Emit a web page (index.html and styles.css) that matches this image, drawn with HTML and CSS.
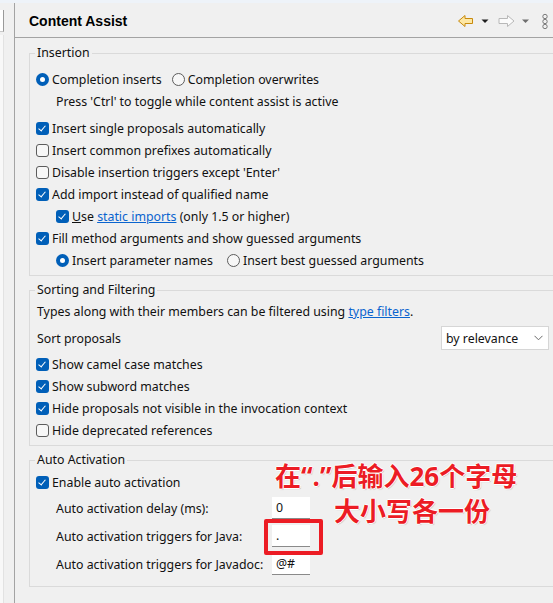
FILE: index.html
```html
<!DOCTYPE html>
<html>
<head>
<meta charset="utf-8">
<link rel="stylesheet" href="styles.css">
</head>
<body>
<div class="top-strip"></div>
<div class="window">
  <div class="side">
    <div class="side-input"></div>
    <div class="side-list"></div>
  </div>
  <div class="main">
    <div class="header">
      <div class="title">Content Assist</div>
      <svg class="nav" width="96" height="34" viewBox="0 0 96 34">
        <path d="M1.5 18 L8 12.5 V15.5 H15.5 V20.5 H8 V23.5 Z" fill="#fde7a4" stroke="#c88a0c" stroke-width="1" stroke-linejoin="round"/>
        <path d="M24.5 16.5 H31.5 L28 20 Z" fill="#1e1e1e"/>
        <path d="M57 18 L50.5 12.5 V15.5 H42 V20.5 H50.5 V23.5 Z" fill="#fbfbfb" stroke="#b8b8b8" stroke-width="1" stroke-linejoin="round"/>
        <path d="M65 16.5 H72 L68.5 20 Z" fill="#6e6e6e"/>
        <circle cx="88" cy="13.5" r="2.2" fill="none" stroke="#7a7a7a" stroke-width="1"/>
        <circle cx="88" cy="18.5" r="2.2" fill="none" stroke="#7a7a7a" stroke-width="1"/>
        <circle cx="88" cy="23.5" r="2.2" fill="none" stroke="#7a7a7a" stroke-width="1"/>
      </svg>
    </div>
    <div class="content">
      <fieldset class="group g-insertion">
        <legend>Insertion</legend>
        <div class="row">
          <span class="radio on"></span><span class="lbl">Completion inserts</span>
          <span class="radio second"></span><span class="lbl">Completion overwrites</span>
        </div>
        <div class="row indent note">Press 'Ctrl' to toggle while content assist is active</div>
        <div class="row"><span class="cb on"></span><span class="lbl">Insert single proposals automatically</span></div>
        <div class="row"><span class="cb"></span><span class="lbl">Insert common prefixes automatically</span></div>
        <div class="row"><span class="cb"></span><span class="lbl">Disable insertion triggers except 'Enter'</span></div>
        <div class="row"><span class="cb on"></span><span class="lbl">Add import instead of qualified name</span></div>
        <div class="row indent"><span class="cb on"></span><span class="lbl"><u>U</u>se <a class="link">static imports</a> (only 1.5 or higher)</span></div>
        <div class="row"><span class="cb on"></span><span class="lbl">Fill method arguments and show guessed arguments</span></div>
        <div class="row indent">
          <span class="radio on"></span><span class="lbl">Insert parameter names</span>
          <span class="radio third"></span><span class="lbl">Insert best guessed arguments</span>
        </div>
      </fieldset>

      <fieldset class="group g-sorting">
        <legend>Sorting and Filtering</legend>
        <div class="text-row">Types along with their members can be filtered using <a class="link">type filters</a>.</div>
        <div class="sort-row">
          <span class="sort-label">Sort proposals</span>
          <div class="combo"><span>by relevance</span>
            <svg width="9" height="6" viewBox="0 0 9 6"><path d="M0.5 0.8 L4.5 4.8 L8.5 0.8" fill="none" stroke="#6a6a6a" stroke-width="1"/></svg>
          </div>
        </div>
        <div class="row"><span class="cb on"></span><span class="lbl">Show camel case matches</span></div>
        <div class="row"><span class="cb on"></span><span class="lbl">Show subword matches</span></div>
        <div class="row"><span class="cb on"></span><span class="lbl">Hide proposals not visible in the invocation context</span></div>
        <div class="row"><span class="cb"></span><span class="lbl">Hide deprecated references</span></div>
      </fieldset>

      <fieldset class="group g-auto">
        <legend>Auto Activation</legend>
        <div class="row"><span class="cb on"></span><span class="lbl">Enable auto activation</span></div>
        <div class="field-row first"><span class="field-label">Auto activation delay (ms):</span><span class="field">0</span></div>
        <div class="field-row"><span class="field-label">Auto activation triggers for Java:</span><span class="field">.</span></div>
        <div class="field-row"><span class="field-label">Auto activation triggers for Javadoc:</span><span class="field">@#</span></div>
      </fieldset>
    </div>
  </div>
</div>

<div class="mark-box"></div>
<div class="note-red">
  <div class="l1">在“.”后输入26个字母</div>
  <div class="l2">大小写各一份</div>
</div>
</body>
</html>
```

FILE: styles.css
```css
html, body {
  margin: 0;
  padding: 0;
}
body {
  width: 553px;
  height: 603px;
  overflow: hidden;
  background: #f0f0f0;
  font-family: "Noto Sans", "Open Sans", sans-serif;
  font-size: 12.35px;
  color: #111;
  position: relative;
}
.top-strip {
  height: 3px;
  background: #eef3f9;
}
.window {
  display: flex;
  height: 600px;
}
.side {
  width: 14px;
  border-right: 1px solid #a3a3a3;
  display: flex;
  flex-direction: column;
}
.side-input {
  margin-top: 7px;
  width: 3px;
  height: 21px;
  background: #fff;
  border-right: 1px solid #9a9a9a;
  border-bottom: 1px solid #c8c8c8;
}
.side-list {
  margin-top: 3px;
  width: 3px;
  flex: 1;
  background: #f8f8f8;
  border-right: 1px solid #e2e2e2;
}
.main {
  flex: 1;
  min-width: 0;
  overflow: hidden;
}
.header {
  height: 34px;
  border-bottom: 1px solid #a3a3a3;
  display: flex;
  align-items: center;
  padding-left: 14px;
}
.title {
  font-family: "Liberation Sans", Arial, sans-serif;
  font-weight: bold;
  font-size: 14px;
  color: #000;
  padding-top: 2px;
}
.nav {
  margin-left: auto;
  display: block;
  flex: none;
}
.content {
  padding-left: 14px;
}
.group {
  box-sizing: border-box;
  width: 560px;
  margin: 0;
  border: 1px solid #dadada;
  padding: 3px 0 4px 6px;
  min-width: 0;
}
.group legend {
  padding: 0 2px;
  margin-left: -1px;
  line-height: 16px;
  color: #111;
}
.g-insertion {
  margin-top: 7px;
  padding-top: 7px;
}
.g-sorting {
  margin-top: 6px;
}
.g-auto {
  margin-top: 6px;
  padding-bottom: 11px;
}
.row {
  display: flex;
  align-items: center;
  height: 22px;
  white-space: nowrap;
}
.row.indent {
  padding-left: 20px;
}
.row.note {
  margin-bottom: 5px;
}
.text-row {
  height: 22px;
  line-height: 22px;
  padding-left: 1px;
  white-space: nowrap;
}
.lbl {
  margin-left: 3px;
}
.cb, .radio {
  box-sizing: border-box;
  width: 13px;
  height: 13px;
  flex: none;
  display: inline-block;
  position: relative;
}
.cb {
  border: 1px solid #5c5c5c;
  border-radius: 3px;
  background: #f7f7f7;
}
.cb.on {
  border: none;
  background: #005fb8;
}
.cb.on::after {
  content: "";
  position: absolute;
  left: 4px;
  top: 2px;
  width: 3px;
  height: 6px;
  border: solid #fff;
  border-width: 0 1.2px 1.2px 0;
  transform: rotate(40deg);
}
.radio {
  border: 1px solid #5c5c5c;
  border-radius: 50%;
  background: #f7f7f7;
}
.radio.on {
  border: none;
  background: #005fb8;
}
.radio.on::after {
  content: "";
  position: absolute;
  left: 4px;
  top: 4px;
  width: 5px;
  height: 5px;
  border-radius: 50%;
  background: #fff;
}
.radio.second {
  margin-left: 10px;
}
.radio.third {
  margin-left: 14px;
}
.link {
  color: #0a64cf;
  text-decoration: underline;
}
.sort-row {
  display: flex;
  align-items: center;
  justify-content: space-between;
  width: 513px;
  height: 24px;
  margin: 3px 0;
  padding-left: 1px;
  box-sizing: border-box;
}
.combo {
  box-sizing: border-box;
  width: 108px;
  height: 24px;
  background: #fff;
  border: 1px solid #d6d6d6;
  display: flex;
  align-items: center;
  justify-content: space-between;
  padding: 0 5px 0 4px;
}
.combo svg {
  display: block;
}
.field-row {
  display: flex;
  align-items: center;
  height: 22px;
  padding-left: 20px;
  margin-top: 6px;
  white-space: nowrap;
}
.field-row.first {
  margin-top: 4px;
}
.field-label {
  width: 216px;
  flex: none;
}
.field {
  box-sizing: border-box;
  width: 38px;
  height: 22px;
  background: #fff;
  border-bottom: 1px solid #8a8a8a;
  padding-left: 4px;
  line-height: 21px;
}
.mark-box {
  position: absolute;
  left: 264px;
  top: 519px;
  width: 59px;
  height: 36px;
  box-sizing: border-box;
  border: 4px solid #ec1c24;
  border-radius: 2px;
}
.note-red {
  position: absolute;
  left: 275px;
  top: 459px;
  width: 260px;
  font-family: "Noto Sans", "Noto Sans CJK SC", sans-serif;
  font-weight: bold;
  font-size: 26px;
  line-height: 35px;
  color: #ec1c24;
  text-shadow: 1px 0 0 #fff, -1px 0 0 #fff, 0 1px 0 #fff, 0 -1px 0 #fff, 1px 1px 1px rgba(0,0,0,0.25);
  white-space: nowrap;
}
.note-red .l2 {
  padding-left: 59px;
}
```
